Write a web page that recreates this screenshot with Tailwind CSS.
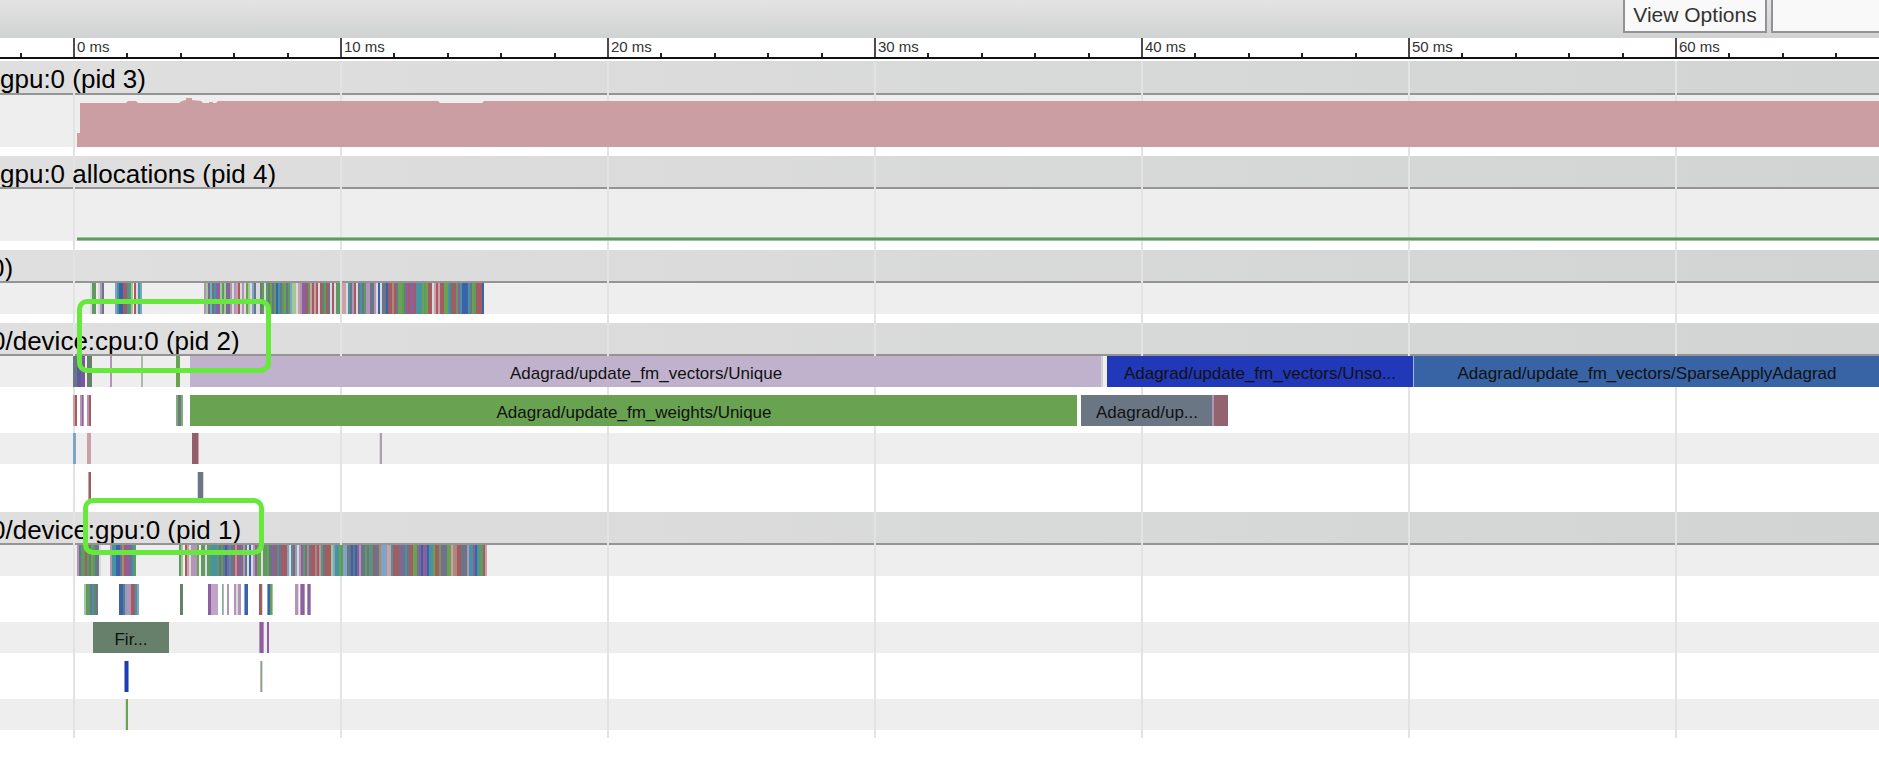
<!DOCTYPE html>
<html lang="en">
<head>
<meta charset="utf-8">
<title>Trace timeline</title>
<script src="https://cdn.jsdelivr.net/npm/@tailwindcss/browser@4"></script>
</head>
<body class="bg-white font-['Liberation_Sans',Arial,sans-serif] text-black overflow-x-hidden">
<div class="flex h-[38px] items-start justify-end gap-1 overflow-hidden bg-linear-to-b from-[#e3e3e3] to-[#d1d2d2]">
  <button type="button" class="-mt-1 h-[37px] w-36 border-2 border-[#929296] bg-[#f9f9f9] text-[21px] leading-8 text-[#333]"><span class="block pt-px">View Options</span></button>
  <input type="text" aria-label="Search" class="-mt-1 -mr-1 h-[37px] w-28 border-2 border-[#929296] bg-[#f9f9f9] px-2 text-[21px]">
</div>
<main class="relative overflow-hidden">
  <svg id="ruler" class="block h-[23px] w-full" aria-label="Time ruler"></svg>
  <svg id="grid" class="pointer-events-none absolute inset-x-0 top-[23px] bottom-0 z-10 h-[calc(100%-23px)] w-full" aria-hidden="true"></svg>

  <section>
    <h2 class="h-[34px] overflow-hidden border-b-2 border-[#949494] bg-linear-to-r from-[#dfdfdf] to-[#d2d4d3] text-[26px] leading-9 whitespace-nowrap"><span class="relative z-20">gpu:0 (pid 3)</span></h2>
    <div class="mb-[9px] h-[52px] bg-[#eeeeee]">
      <svg class="relative z-20 block h-full w-full">
        <path d="M77 52V38H80V8H126L128 6H136L138 8H179L182 6L186 5V3H192V5L201 6L203 8H209V7H213V8H216L218 6H438L440 8H482L484 6H6000V52Z" fill="#c9999f" fill-opacity=".94"/>
      </svg>
    </div>
  </section>
  <section>
    <h2 class="h-[33px] overflow-hidden border-b-2 border-[#949494] bg-linear-to-r from-[#dfdfdf] to-[#d2d4d3] text-[26px] leading-9 whitespace-nowrap"><span class="relative z-20">gpu:0 allocations (pid 4)</span></h2>
    <div class="mb-[9px] h-[52px] bg-[#eeeeee]">
      <svg class="relative z-20 block h-full w-full"><rect x="77" y="48" width="6000" height="4" fill="#9cc49a"/><rect x="77" y="49" width="6000" height="2" fill="#5f9a5f"/></svg>
    </div>
  </section>
  <section>
    <h2 class="h-[33px] overflow-hidden border-b-2 border-[#949494] bg-linear-to-r from-[#dfdfdf] to-[#d2d4d3] text-[26px] leading-9 whitespace-nowrap"><span class="relative z-20 -ml-[10px]">0)</span></h2>
    <div class="mb-[9px] h-[31px] bg-[#eeeeee]"><svg data-track="stream" class="relative z-20 block h-full w-full"></svg></div>
  </section>
  <section class="pb-[2px]">
    <h2 class="h-[33px] overflow-hidden border-b-2 border-[#949494] bg-linear-to-r from-[#dfdfdf] to-[#d2d4d3] text-[26px] leading-9 whitespace-nowrap"><span class="relative z-20 -ml-[9px]">0/device:cpu:0 (pid 2)</span></h2>
    <div class="mb-2 h-[31px] bg-[#eeeeee]"><svg data-track="cpu1" class="relative z-20 block h-full w-full"></svg></div>
    <div class="mb-[7px] h-[31px]"><svg data-track="cpu2" class="relative z-20 block h-full w-full"></svg></div>
    <div class="mb-2 h-[31px] bg-[#eeeeee]"><svg data-track="cpu3" class="relative z-20 block h-full w-full"></svg></div>
    <div class="mb-[7px] h-[31px]"><svg data-track="cpu4" class="relative z-20 block h-full w-full"></svg></div>
  </section>
  <section>
    <h2 class="h-[33px] overflow-hidden border-b-2 border-[#949494] bg-linear-to-r from-[#dfdfdf] to-[#d2d4d3] text-[26px] leading-9 whitespace-nowrap"><span class="relative z-20 -ml-[9px]">0/device:gpu:0 (pid 1)</span></h2>
    <div class="mb-2 h-[31px] bg-[#eeeeee]"><svg data-track="gpu1" class="relative z-20 block h-full w-full"></svg></div>
    <div class="mb-[7px] h-[31px]"><svg data-track="gpu2" class="relative z-20 block h-full w-full"></svg></div>
    <div class="mb-2 h-[31px] bg-[#eeeeee]"><svg data-track="gpu3" class="relative z-20 block h-full w-full"></svg></div>
    <div class="mb-[7px] h-[31px]"><svg data-track="gpu4" class="relative z-20 block h-full w-full"></svg></div>
    <div class="mb-2 h-[31px] bg-[#eeeeee]"><svg data-track="gpu5" class="relative z-20 block h-full w-full"></svg></div>
  </section>

  <!-- highlight boxes over the device names -->
  <div class="absolute top-[261px] left-[77px] z-30 h-[74px] w-[194px] rounded-[10px] border-[5px] border-[#66e83c]"></div>
  <div class="absolute top-[460px] left-[83px] z-30 h-[57px] w-[181px] rounded-[10px] border-[5px] border-[#66e83c]"></div>
</main>
<script>
const NS = 'http://www.w3.org/2000/svg';
function add(svg, tag, attrs, text) {
  const e = document.createElementNS(NS, tag);
  for (const k in attrs) e.setAttribute(k, attrs[k]);
  if (text) e.textContent = text;
  svg.appendChild(e);
}
const C = {
  g: '#69a251', G: '#5f9a64', l: '#a2c896', p: '#8e5f9e', P: '#b294b8', r: '#a25c62', R: '#cda0a5',
  s: '#6a7688', b: '#3863a8', B: '#2138b8', t: '#4694a2', w: '#d9d9de', k: '#7ea4c6', o: '#b0857c', d: '#67806c'
};
// time axis: 267 px per 10 ms, drawn as far as the window reaches
const ruler = document.getElementById('ruler'), grid = document.getElementById('grid');
function drawAxis() {
  ruler.replaceChildren();
  grid.replaceChildren();
  for (let i = -1; 73 + i * 53.4 < window.innerWidth; i++) {
    const x = Math.round(73 + i * 53.4);
    if (i % 5 === 0) {
      add(ruler, 'rect', {x, y: 0, width: 2, height: 20, fill: '#4a4a50'});
      add(ruler, 'text', {x: x + 4, y: 14, 'font-size': 15, fill: '#333'}, i * 2 + ' ms');
      add(grid, 'rect', {x, y: 0, width: 2, height: '100%', fill: '#e3e3e3'});
    } else add(ruler, 'rect', {x, y: 15, width: 2, height: 5, fill: '#222'});
  }
  add(ruler, 'rect', {x: 0, y: 19, width: '100%', height: 2, fill: '#111'});
}
drawAxis();
window.addEventListener('resize', drawAxis);

// stripes: [x, codes] draws one 2px stripe per code; blocks: [x, width, colour, label]
const tracks = {
  stream: {stripes: [
    [90,'wG'],[94,'G'],[98,'wPs'],[115,'ktbbrrtGl'],[134,'rw'],[138,'tk'],
    [204,'PlskstpplGlpsPwPRrwPwglwkswwdGwGdgsGbtsGgsGkllwRPpprGRrRrwrdGrswrwGGwRRwtsPrwstsGPPssPwbwssbrrorsggGdprpprtttgGgrrwRrRrrggtsrrGptbbbtsgGrrrb']
  ]},
  cpu1: {blocks: [[73,4,C.s],[77,4,'#5c5b9c'],[81,4,'#7b57a0'],[87,5,C.d],[110,2,C.P],[141,2,'#a9bda9'],[176,4,C.g],
    [190,911,'#c0b2cc','Adagrad/update_fm_vectors/Unique'],[1101,2,'#cfcfd5'],[1107,306,'#2138b8','Adagrad/update_fm_vectors/Unso...'],[1413,1,'#9fb8d0'],[1414,466,'#3863a5','Adagrad/update_fm_vectors/SparseApplyAdagrad'],[1880,4000,'#3863a5']]},
  cpu2: {blocks: [[73,2,C.R],[75,2,C.r],[80,2,C.P],[82,1,C.p],[83,1,C.P],[87,2,C.P],[89,2,C.r],[176,2,'#86a587'],[178,3,C.d],[181,2,'#86a587'],
    [190,887,C.g,'Adagrad/update_fm_weights/Unique'],[1081,131,'#6b7684','Adagrad/up...'],[1212,2,C.P],[1214,14,'#93636f']]},
  cpu3: {blocks: [[73,3,C.k],[87,4,C.R],[192,6,'#93606a'],[198,1,C.R],[379,1,C.w],[380,2,'#aaa0b2']]},
  cpu4: {blocks: [[88,1,C.R],[89,2,'#93606a'],[197,1,C.w],[198,5,C.s],[203,1,C.w]]},
  gpu1: {stripes: [
    [77,'PsGGrGdgGss'],[99,'w'],[110,'PttbbsorppstG'],[179,'Gl'],[185,'rRwPPPg'],
    [201,'GGwGGtttGsGsbptsrPrpsPswbwPpggwGGgssprtsrrrkwt'],
    [293,'rkwPpGsosrrorPGsrrrlkttgGkkssbsbpPssGsGtrssokkkRRtrrrspstsrrggspbppbttgrrgpssggRoorrsssPttpbtGGrR']
  ]},
  gpu2: {stripes: [[84,'lGGstds'],[119,'bbskPPrrtk']],
    blocks: [[180,3,C.d],[208,3,C.p],[211,7,'#c0a4c8'],[222,1,C.k],[223,1,C.l],[227,2,C.P],[234,2,C.P],[236,2,C.w],[238,3,C.P],[244,1,C.k],[245,3,C.b],[259,3,C.r],[262,1,C.w],[267,1,C.k],[268,2,C.b],[270,2,C.g],[272,1,C.l],[295,3,C.P],[298,1,C.w],[300,1,C.P],[301,3,C.p],[304,1,C.P],[307,1,C.P],[308,2,C.p],[310,1,C.P]]},
  gpu3: {blocks: [[93,76,'#67806c','Fir...'],[259,1,C.P],[260,3,C.p],[263,1,C.P],[267,2,C.p]]},
  gpu4: {blocks: [[124,1,C.k],[125,3,C.B],[128,1,C.k],[260,1,C.l],[261,1,'#999'],[262,1,C.w]]},
  gpu5: {blocks: [[125,1,C.w],[126,2,C.g]]}
};
for (const svg of document.querySelectorAll('[data-track]')) {
  const t = tracks[svg.dataset.track];
  for (const [x, codes] of t.stripes || [])
    [...codes].forEach((c, i) => add(svg, 'rect', {x: x + i * 2, y: 0, width: 2, height: 31, fill: C[c]}));
  for (const [x, w, fill, label] of t.blocks || []) {
    add(svg, 'rect', {x, y: 0, width: w, height: 31, fill});
    if (label) add(svg, 'text', {x: x + Math.round(w / 2), y: 23, 'font-size': 17, 'text-anchor': 'middle', fill: '#111'}, label);
  }
}
</script>
</body>
</html>
